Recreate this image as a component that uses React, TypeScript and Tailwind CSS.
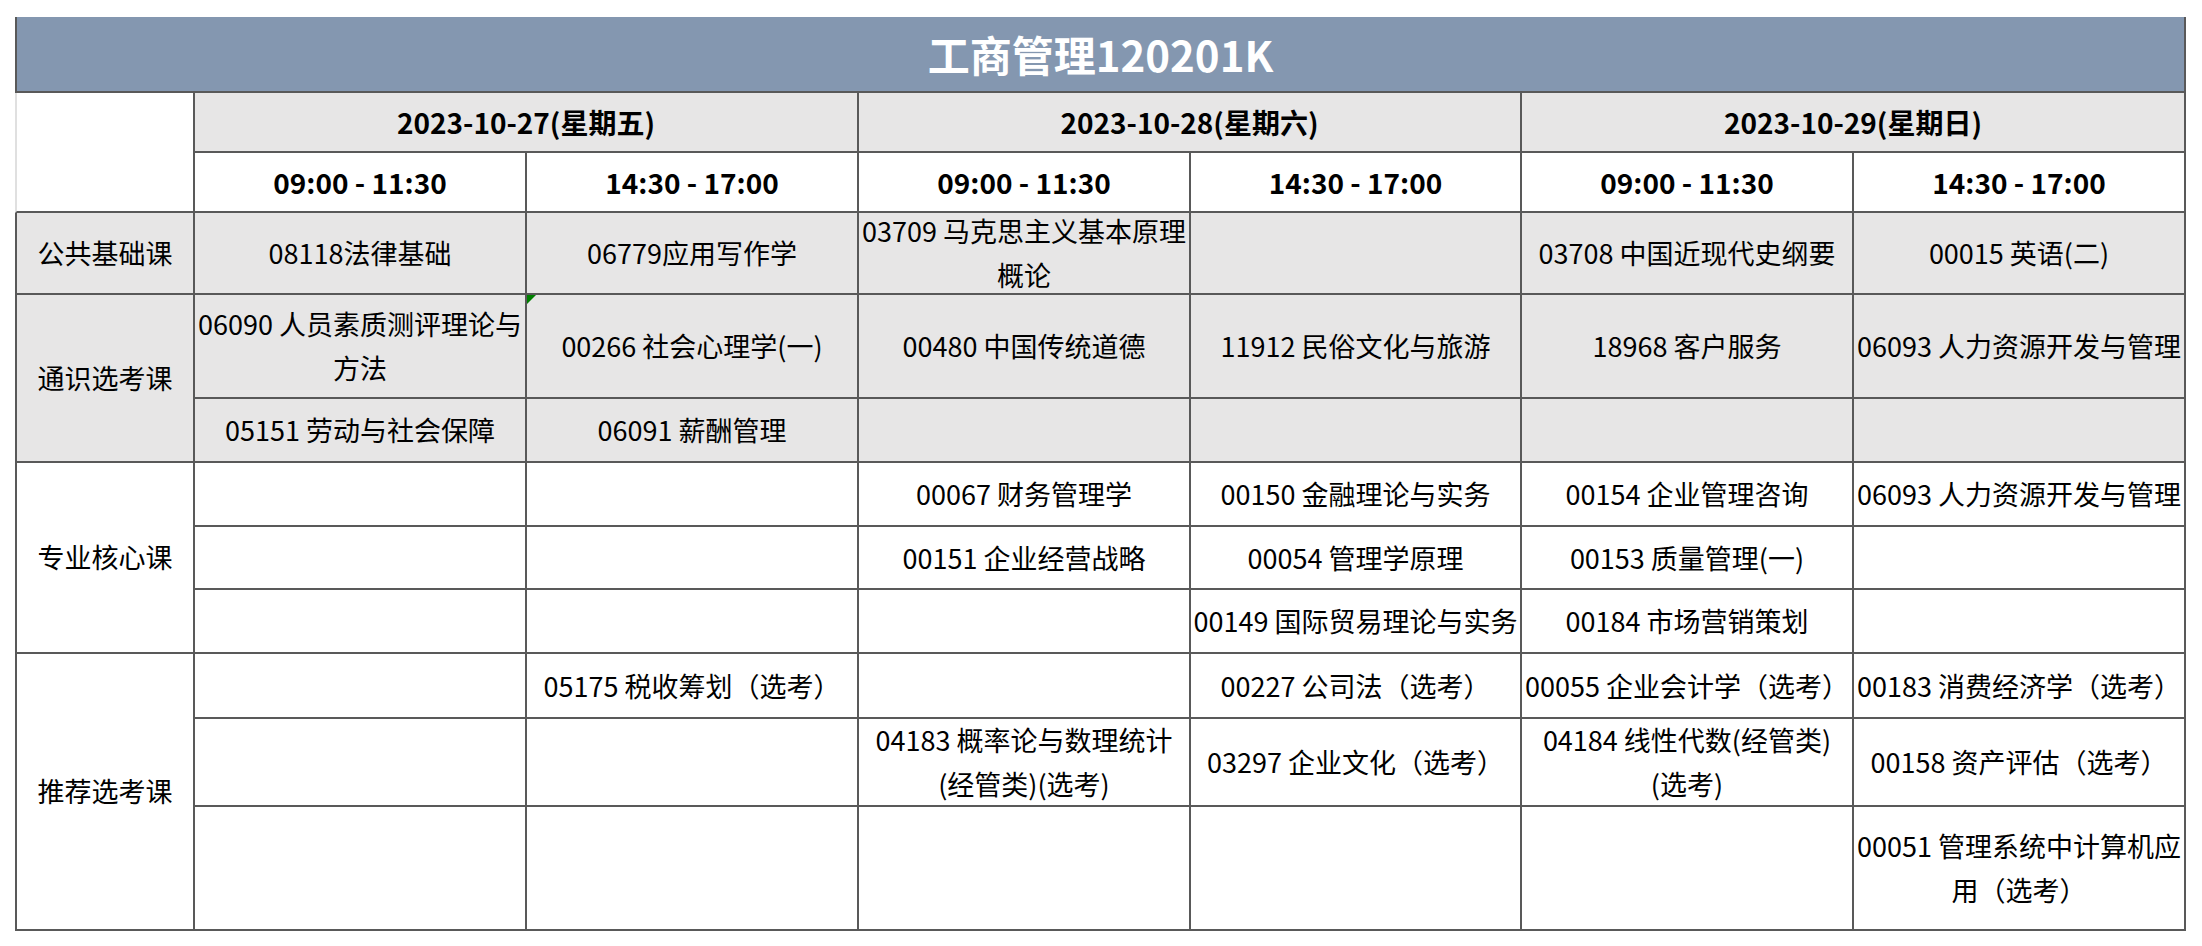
import React from "react";

const colW = ["w-[332px]", "w-[332px]", "w-[332px]", "w-[331px]", "w-[332px]", "w-[332px]"];

const days = [
  { date: "2023-10-27(星期五)", w: "w-[664px]" },
  { date: "2023-10-28(星期六)", w: "w-[663px]" },
  { date: "2023-10-29(星期日)", w: "w-[664px]" },
];

type Group = {
  label: string;
  gray: boolean;
  rows: { h: string; cells: string[] }[];
};

const groups: Group[] = [
  {
    label: "公共基础课",
    gray: true,
    rows: [
      {
        h: "h-[82px]",
        cells: ["08118法律基础", "06779应用写作学", "03709 马克思主义基本原理\n概论", "", "03708 中国近现代史纲要", "00015 英语(二)"],
      },
    ],
  },
  {
    label: "通识选考课",
    gray: true,
    rows: [
      {
        h: "h-[104px]",
        cells: ["06090 人员素质测评理论与\n方法", "00266 社会心理学(一)", "00480 中国传统道德", "11912 民俗文化与旅游", "18968 客户服务", "06093 人力资源开发与管理"],
      },
      { h: "h-[64px]", cells: ["05151 劳动与社会保障", "06091 薪酬管理", "", "", "", ""] },
    ],
  },
  {
    label: "专业核心课",
    gray: false,
    rows: [
      { h: "h-[64px]", cells: ["", "", "00067 财务管理学", "00150 金融理论与实务", "00154 企业管理咨询", "06093 人力资源开发与管理"] },
      { h: "h-[63px]", cells: ["", "", "00151 企业经营战略", "00054 管理学原理", "00153 质量管理(一)", ""] },
      { h: "h-[64px]", cells: ["", "", "", "00149 国际贸易理论与实务", "00184 市场营销策划", ""] },
    ],
  },
  {
    label: "推荐选考课",
    gray: false,
    rows: [
      { h: "h-[65px]", cells: ["", "05175 税收筹划（选考）", "", "00227 公司法（选考）", "00055 企业会计学（选考）", "00183 消费经济学（选考）"] },
      {
        h: "h-[88px]",
        cells: ["", "", "04183 概率论与数理统计\n(经管类)(选考)", "03297 企业文化（选考）", "04184 线性代数(经管类)\n(选考)", "00158 资产评估（选考）"],
      },
      { h: "h-[124px]", cells: ["", "", "", "", "", "00051 管理系统中计算机应\n用（选考）"] },
    ],
  },
];

const line = "border-[#595959]";

export default function App() {
  return (
    <div className="w-[2202px] h-[946px] bg-white pt-[17px] pl-[15px] text-black font-['Noto_Sans_CJK_SC',sans-serif]">
      <div className="w-[2171px]">
        {/* title */}
        <div className={`h-[76px] bg-[#8497b0] border-l-2 border-r-2 border-b-2 ${line} flex items-center justify-center`}>
          <span className="text-[42px] font-bold text-white leading-none">工商管理120201K</span>
        </div>

        {/* date / time header */}
        <div className="flex">
          <div className="w-[180px] h-[120px] shrink-0 border-l-2 border-l-[#e0e0e0] border-r-2 border-b-2 border-r-[#595959] border-b-[#595959] bg-white" />
          {days.map((d) => (
            <div key={d.date} className={`${d.w} shrink-0 flex flex-col`}>
              <div className={`h-[60px] bg-[#e7e6e6] border-r-2 border-b-2 ${line} flex items-center justify-center text-[28px] font-bold`}>
                {d.date}
              </div>
              <div className="flex">
                <div className={`w-[332px] h-[60px] shrink-0 border-r-2 border-b-2 ${line} flex items-center justify-center text-[28px] font-bold`}>
                  09:00 - 11:30
                </div>
                <div className={`flex-1 h-[60px] border-r-2 border-b-2 ${line} flex items-center justify-center text-[28px] font-bold`}>
                  14:30 - 17:00
                </div>
              </div>
            </div>
          ))}
        </div>

        {/* course groups */}
        {groups.map((g) => (
          <div key={g.label} className={`flex ${g.gray ? "bg-[#e7e6e6]" : "bg-white"}`}>
            <div className={`w-[180px] shrink-0 border-l-2 border-r-2 border-b-2 ${line} flex items-center justify-center text-[27px]`}>
              {g.label}
            </div>
            <div className="flex flex-col">
              {g.rows.map((r, ri) => (
                <div key={ri} className={`flex ${r.h}`}>
                  {r.cells.map((c, ci) => (
                    <div
                      key={ci}
                      className={`${colW[ci]} relative shrink-0 border-r-2 border-b-2 ${line} flex items-center justify-center text-center text-[27px] leading-[44px] whitespace-pre`}
                    >
                      {g.label === "通识选考课" && ri === 0 && ci === 1 && (
                        <span className="absolute top-0 left-0 w-0 h-0 border-t-[9px] border-t-[#008000] border-r-[9px] border-r-transparent" />
                      )}
                      {c}
                    </div>
                  ))}
                </div>
              ))}
            </div>
          </div>
        ))}
      </div>
    </div>
  );
}
